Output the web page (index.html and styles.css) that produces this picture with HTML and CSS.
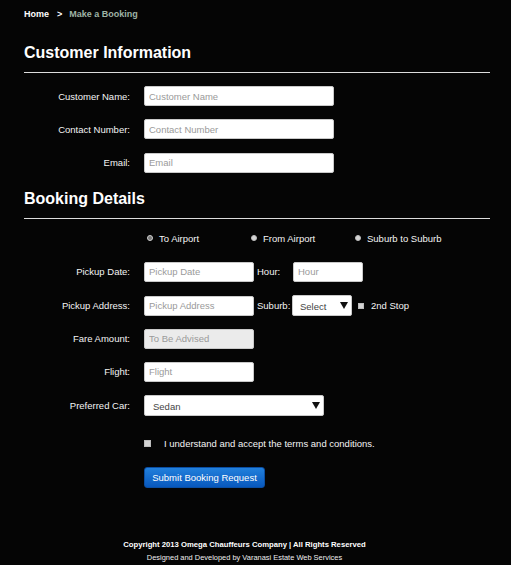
FILE: index.html
```html
<!doctype html>
<html lang="en">
<head>
<meta charset="utf-8">
<title>Make a Booking</title>
<link rel="stylesheet" href="styles.css">
</head>
<body>

<div class="page">
  <div class="crumbs"><a href="#">Home</a><span class="sep">&gt;</span><span class="here">Make a Booking</span></div>

  <h2>Customer Information</h2>
  <hr>

  <div class="rows">
    <div class="row">
      <label>Customer Name:</label>
      <div class="cell"><input class="w190" type="text" placeholder="Customer Name"></div>
    </div>
    <div class="row">
      <label>Contact Number:</label>
      <div class="cell"><input class="w190" type="text" placeholder="Contact Number"></div>
    </div>
    <div class="row">
      <label>Email:</label>
      <div class="cell"><input class="w190" type="text" placeholder="Email"></div>
    </div>
  </div>

  <h2 class="second">Booking Details</h2>
  <hr>

  <div class="trip">
    <label class="opt"><input type="radio" name="trip" checked> To Airport</label>
    <label class="opt"><input type="radio" name="trip"> From Airport</label>
    <label class="opt"><input type="radio" name="trip"> Suburb to Suburb</label>
  </div>

  <div class="rows">
    <div class="row">
      <label>Pickup Date:</label>
      <div class="cell">
        <input class="w110" type="text" placeholder="Pickup Date">
        <span class="inline">Hour:</span>
        <input class="w70 hour" type="text" placeholder="Hour">
      </div>
    </div>
    <div class="row">
      <label>Pickup Address:</label>
      <div class="cell">
        <input class="w110" type="text" placeholder="Pickup Address">
        <span class="inline">Suburb:</span>
        <span class="pick w60">
          <select><option>Select</option></select>
          <svg class="arrow" width="8" height="7" viewBox="0 0 8 7"><polygon points="0,0 8,0 4,7" fill="#111"/></svg>
        </span>
        <label class="stop"><input type="checkbox"> 2nd Stop</label>
      </div>
    </div>
    <div class="row">
      <label>Fare Amount:</label>
      <div class="cell"><input class="w110" type="text" placeholder="To Be Advised" disabled></div>
    </div>
    <div class="row">
      <label>Flight:</label>
      <div class="cell"><input class="w110" type="text" placeholder="Flight"></div>
    </div>
    <div class="row">
      <label>Preferred Car:</label>
      <div class="cell">
        <span class="pick w180 car">
          <select><option>Sedan</option></select>
          <svg class="arrow" width="8" height="7" viewBox="0 0 8 7"><polygon points="0,0 8,0 4,7" fill="#111"/></svg>
        </span>
      </div>
    </div>
  </div>

  <label class="terms"><input type="checkbox"> I understand and accept the terms and conditions.</label>

  <button class="submit" type="button">Submit Booking Request</button>
</div>

<div class="footer">
  <p class="copy">Copyright 2013 Omega Chauffeurs Company | All Rights Reserved</p>
  <p class="credit">Designed and Developed by Varanasi Estate Web Services</p>
</div>

</body>
</html>
```

FILE: styles.css
```css
body {
  margin: 0;
  background: #050505;
  color: #f4f4f4;
  font-family: "Liberation Sans", Arial, sans-serif;
  font-size: 9.5px;
}
.page {
  width: 466px;
  padding: 9px 0 0 24px;
}
.crumbs {
  font-size: 9px;
  font-weight: bold;
  line-height: 11px;
}
.crumbs a {
  color: #ffffff;
  text-decoration: none;
}
.crumbs .sep {
  color: #ffffff;
  margin: 0 7px 0 8px;
}
.crumbs .here {
  color: #9fb3a6;
}
h2 {
  margin: 23px 0 0;
  font-size: 16px;
  line-height: 19px;
  color: #ffffff;
}
h2.second {
  margin-top: 16px;
}
hr {
  margin: 10px 0 0;
  border: 0;
  border-top: 1px solid #dddddd;
}
.rows {
  display: flex;
  flex-direction: column;
  gap: 13.4px;
  margin-top: 13px;
}
.row {
  display: grid;
  grid-template-columns: 106px 1fr;
  column-gap: 14px;
  align-items: center;
  height: 20px;
}
.row > label {
  text-align: right;
}
.cell {
  display: flex;
  align-items: center;
}
input[type="text"] {
  box-sizing: border-box;
  height: 20px;
  padding: 0 4px;
  border: 1px solid #c9c9c9;
  border-radius: 2px;
  background: #ffffff;
  font-family: inherit;
  font-size: 9.5px;
  color: #333333;
}
input::placeholder {
  color: #9a9a9a;
}
input[type="text"]:disabled {
  background: #ebebeb;
}
.w190 { width: 190px; }
.w110 { width: 110px; }
.w70 { width: 70px; }
.w60 { width: 60px; }
.w180 { width: 180px; }
.inline {
  width: 35px;
  margin-left: 3px;
}
.hour {
  margin-left: 1px;
}
.pick {
  position: relative;
  display: inline-block;
  height: 21px;
}
.pick select {
  box-sizing: border-box;
  width: 100%;
  height: 21px;
  margin: 0;
  padding: 2px 0 0 7px;
  border: 1px solid #c9c9c9;
  border-radius: 2px;
  background: #ffffff;
  color: #444444;
  font-family: inherit;
  font-size: 9.5px;
  appearance: none;
  -webkit-appearance: none;
}
.car select {
  padding-left: 8px;
}
.pick .arrow {
  position: absolute;
  right: 4px;
  top: 7px;
  pointer-events: none;
}
.stop {
  display: flex;
  align-items: center;
  margin-left: 6px;
}
input[type="checkbox"],
input[type="radio"] {
  appearance: none;
  -webkit-appearance: none;
  box-sizing: border-box;
  margin: 0;
  background: #d4d4d4;
  border: 1px solid #bdbdbd;
}
.stop input {
  width: 6px;
  height: 6px;
  margin-right: 7px;
}
.trip {
  display: grid;
  grid-template-columns: 104px 104px 104px;
  margin: 14px 0 0 123px;
  line-height: 11px;
}
.opt {
  display: flex;
  align-items: center;
}
.opt input {
  width: 6px;
  height: 6px;
  border-radius: 50%;
  margin-right: 6px;
}
.opt input:checked {
  background: #7a7a7a;
  border: 1.5px solid #cfcfcf;
}
.trip + .rows {
  margin-top: 18px;
}
.terms {
  display: flex;
  align-items: center;
  margin: 23px 0 0 120px;
  line-height: 11px;
}
.terms input {
  width: 7px;
  height: 7px;
  margin-right: 13px;
}
.submit {
  display: block;
  box-sizing: border-box;
  width: 121px;
  height: 21px;
  margin: 18px 0 0 120px;
  padding: 0;
  border: 1px solid #0a4ea3;
  border-radius: 3px;
  background: linear-gradient(#2280dc, #0858bd);
  color: #ffffff;
  font-family: inherit;
  font-size: 9.5px;
}
.footer {
  margin-top: 50px;
  text-align: center;
  padding-right: 22px;
}
.footer p {
  margin: 0;
  line-height: 13px;
}
.copy {
  font-size: 7.7px;
  font-weight: bold;
  color: #ffffff;
}
.credit {
  font-size: 7.45px;
  color: #eeeeee;
}
```
